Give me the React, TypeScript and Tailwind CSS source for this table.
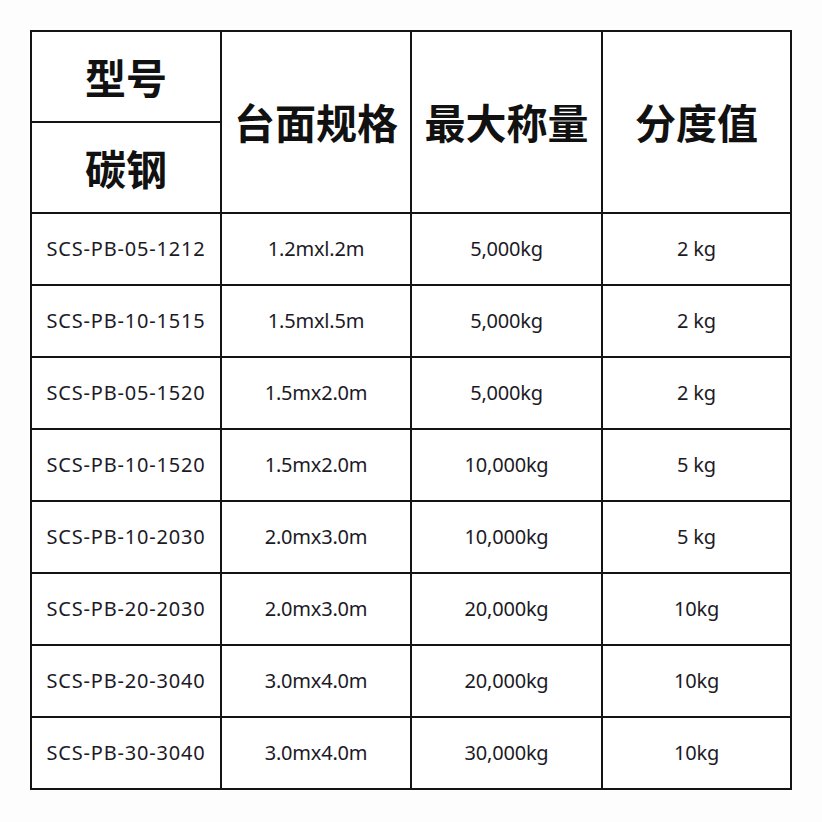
const rows = [
  ['SCS-PB-05-1212', '1.2mxl.2m', '5,000kg', '2 kg'],
  ['SCS-PB-10-1515', '1.5mxl.5m', '5,000kg', '2 kg'],
  ['SCS-PB-05-1520', '1.5mx2.0m', '5,000kg', '2 kg'],
  ['SCS-PB-10-1520', '1.5mx2.0m', '10,000kg', '5 kg'],
  ['SCS-PB-10-2030', '2.0mx3.0m', '10,000kg', '5 kg'],
  ['SCS-PB-20-2030', '2.0mx3.0m', '20,000kg', '10kg'],
  ['SCS-PB-20-3040', '3.0mx4.0m', '20,000kg', '10kg'],
  ['SCS-PB-30-3040', '3.0mx4.0m', '30,000kg', '10kg'],
];

const headFont = "font-['Noto_Sans_CJK_SC',sans-serif]";

export default function App() {
  return (
    <div className="min-h-[822px] w-[822px] bg-[#fdfdfd] pt-[30px] pl-[30px]">
      <div
        className="grid w-[762px] grid-cols-[188px_188px_189px_187px] grid-rows-[89px_89px_repeat(8,70px)] gap-[2px] bg-[#141414] p-[2px]"
      >
        <div className={`flex items-center justify-center bg-white text-[41px] font-bold text-[#111] ${headFont}`}>
          型号
        </div>
        <div className={`row-span-2 flex items-center justify-center bg-white text-[41px] font-bold text-[#111] ${headFont}`}>
          台面规格
        </div>
        <div className={`row-span-2 flex items-center justify-center bg-white text-[41px] font-bold text-[#111] ${headFont}`}>
          最大称量
        </div>
        <div className={`row-span-2 flex items-center justify-center bg-white text-[41px] font-bold text-[#111] ${headFont}`}>
          分度值
        </div>
        <div className={`flex items-center justify-center bg-white text-[41px] font-bold text-[#111] ${headFont}`}>
          碳钢
        </div>
        {rows.map((r) =>
          r.map((cell, i) => (
            <div
              key={r[0] + i}
              className={`flex items-center justify-center bg-white font-['Noto_Sans',sans-serif] text-[20px] text-[#1c1a26] ${
                i === 0 ? 'tracking-[0.8px]' : 'tracking-[-0.2px]'
              }`}
            >
              {cell}
            </div>
          ))
        )}
      </div>
    </div>
  );
}
